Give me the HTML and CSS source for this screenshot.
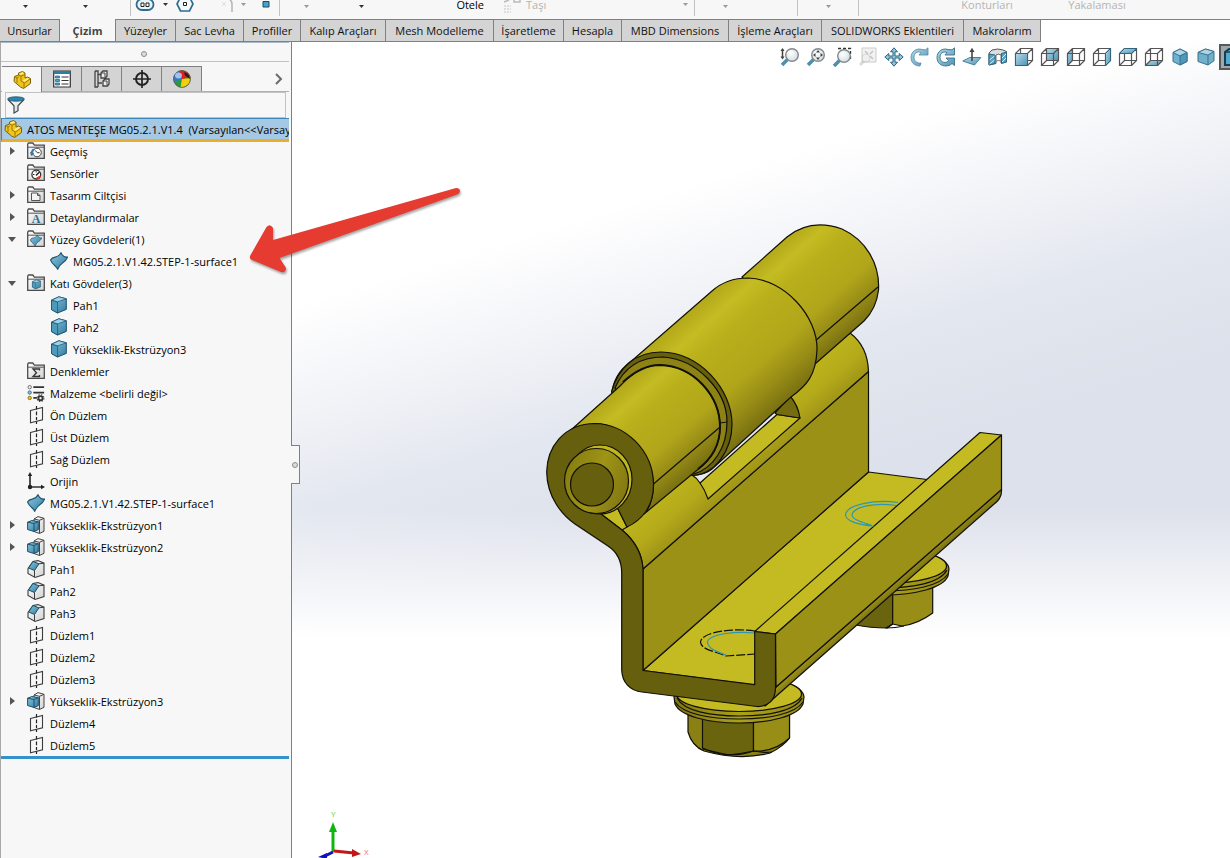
FILE: index.html
```html
<!DOCTYPE html>
<html lang="tr">
<head>
<meta charset="utf-8">
<title>ATOS MENTEŞE MG05.2.1.V1.4</title>
<link rel="stylesheet" href="styles.css">
</head>
<body>
<svg class="sprite" aria-hidden="true">
  <defs>
    <linearGradient id="gBlue" x1="0" y1="0" x2="1" y2="1"><stop offset="0" stop-color="#8cc6e0"/><stop offset="1" stop-color="#2f7b9f"/></linearGradient>
    <linearGradient id="gPale" x1="0" y1="0" x2="1" y2="1"><stop offset="0" stop-color="#b4dbec"/><stop offset="1" stop-color="#4f93b4"/></linearGradient>
    <linearGradient id="gGrey" x1="0" y1="0" x2="1" y2="1"><stop offset="0" stop-color="#ffffff"/><stop offset="1" stop-color="#d2d2d2"/></linearGradient>
    <radialGradient id="gLens" cx=".4" cy=".35" r=".7"><stop offset="0" stop-color="#ffffff"/><stop offset="1" stop-color="#cfdde3"/></radialGradient>
    <symbol id="folder" viewBox="0 0 18 18"><path d="M.7 16.3V2.2L1.5 1h4.3l1.6 2.2h9.9v13.1z" fill="url(#gGrey)" stroke="#4c4c4c" stroke-width="1.3"/><path d="M1 5.2h16" stroke="#555"/></symbol>
    <symbol id="history" viewBox="0 0 18 18"><use href="#folder"/><circle cx="10" cy="10.5" r="4.3" fill="#fff" stroke="#444"/><path d="M8 8.3l2.3 2.4h2.3" fill="none" stroke="#333"/><path d="M4.5 13.5c-.2-3 .3-5 2.2-6.2" fill="none" stroke="#2e7da5" stroke-width="1.6"/><path d="M2.8 10l2 4 2.2-3z" fill="#2e7da5"/></symbol>
    <symbol id="sensor" viewBox="0 0 18 18"><use href="#folder"/><circle cx="9.3" cy="10.6" r="4.4" fill="#fff" stroke="#333" stroke-width="1.3"/><path d="M9 11.5L12.5 8" stroke="#222" stroke-width="1.5"/><path d="M9.5 14l3.8-2-1 3z" fill="#e23b1c" stroke="#e23b1c"/><path d="M6 10.5h1.5M9.2 7v1.5" stroke="#333"/></symbol>
    <symbol id="binder" viewBox="0 0 18 18"><use href="#folder"/><path d="M4.5 7h6l2.5 2.5v5H4.5z" fill="#f4f4f4" stroke="#555"/><path d="M10.5 7v2.5H13" fill="none" stroke="#555"/></symbol>
    <symbol id="annot" viewBox="0 0 18 18"><use href="#folder"/><text x="9" y="15" text-anchor="middle" font-family="Liberation Serif, serif" font-weight="bold" font-size="12" fill="#2a6f93">A</text></symbol>
    <symbol id="surf" viewBox="0 0 18 18"><path d="M.5 8C3.500 3 7.500 7.500 11 .7C12.500 4 15 5.500 17.600 5C14.500 12.500 11.500 8.500 7.700 17.300C6.500 13.500 3 14 .5 8z" fill="url(#gBlue)" stroke="#1f556f" stroke-width="1.100"/></symbol>
    <symbol id="surfFolder" viewBox="0 0 18 18"><use href="#folder"/><use href="#surf" x="3" y="4.500" width="12" height="12"/></symbol>
    <symbol id="solid" viewBox="0 0 18 18"><path d="M1.500 4.200L8.800.8l7.500 2v10.600L7.500 17l-6-3.400z" fill="url(#gBlue)" stroke="#1c4f68"/><path d="M1.500 4.200L8.800.8l7.500 2-8.700 3.100z" fill="#9bd3ea" stroke="#1c4f68" stroke-width=".7"/><path d="M7.600 6V17l-6.100-3.400V4.200z" fill="#4d9abb" stroke="#1c4f68" stroke-width=".7"/></symbol>
    <symbol id="solidFolder" viewBox="0 0 18 18"><use href="#folder"/><use href="#solid" x="4.500" y="5.500" width="10" height="10"/></symbol>
    <symbol id="equation" viewBox="0 0 18 18"><use href="#folder"/><path d="M12.500 8.500V7H6l3.500 3.800L6 14.500h6.500V13" fill="none" stroke="#333" stroke-width="1.300"/></symbol>
    <symbol id="material" viewBox="0 0 20 20"><g stroke="#333" stroke-width="2"><path d="M7 3.500h12M7 9.500h12M7 15.500h4"/></g><circle cx="3" cy="3.500" r="1.900" fill="#eee" stroke="#666"/><circle cx="3" cy="9.500" r="1.900" fill="#70bfe0" stroke="#4c7282"/><circle cx="3" cy="15.500" r="1.900" fill="#f2c21c" stroke="#8a6e14"/><circle cx="15" cy="15.700" r="2.300" fill="none" stroke="#333" stroke-width="2"/><circle cx="15" cy="15.700" r="3.800" fill="none" stroke="#333" stroke-width="1.200" stroke-dasharray="1.500 1.500"/></symbol>
    <symbol id="plane" viewBox="0 0 18 18"><path d="M3.500 4.500l12-3v12.300l-12 3z" fill="none" stroke="#3c3c3c" stroke-width="1.100"/><path d="M9.500 0v3.500M9.500 5.500v3.800M9.500 11v3M9.500 15.500V18" stroke="#222" stroke-width="1.200"/></symbol>
    <symbol id="origin" viewBox="0 0 18 18"><path d="M3 2v13h12" fill="none" stroke="#333" stroke-width="1.700"/><path d="M.8 4L3 0l2.200 4zM14 12.800l4 2.200-4 2.200z" fill="#222"/><circle cx="3" cy="15" r="2.200" fill="#222"/></symbol>
    <symbol id="extrude" viewBox="0 0 18 18"><path d="M7 3l4-2.400 6 1.700v13L12.500 17.500 7 15.500z" fill="url(#gGrey)" stroke="#444"/><path d="M12.500 4.300L17 2.300M12.500 4.300v13M7 3l5.500 1.300" fill="none" stroke="#444"/><path d="M.6 6.200l4.200-1.700 6.500 1.100v8L7 15.500l-6.400-2z" fill="url(#gBlue)" stroke="#1c4f68"/><path d="M.6 6.200L7 7.500l4.300-1.900M7 7.500v8" fill="none" stroke="#1c4f68"/></symbol>
    <symbol id="chamfer" viewBox="0 0 18 18"><path d="M1 8.500L6 1.500 11 .6l6 2.600v11.300L8 17.400l-7-4z" fill="url(#gGrey)" stroke="#3d3d3d" stroke-width="1.100"/><path d="M1.500 8L6 1.500l6 2.300L7.500 10.500z" fill="url(#gBlue)" stroke="#1c4f68"/><path d="M7.500 10.500v6.500M12 3.800l5-.6" stroke="#3d3d3d" fill="none"/></symbol>
    <symbol id="part" viewBox="0 0 18 18"><path d="M1.500 5.500l4-1.500v-2l4-1.500L12 2v5l2.500-1 3 1.500v5l-7 5-3-1.500L1 10.500z" fill="#f3c51c" stroke="#7d6209"/><path d="M5.500 4L8 5.200V10l3.500 2 6-4.300M8 5.200L12 3.500M11 12v5M1.500 5.500L4 7v5M4 7l1.800-1" fill="none" stroke="#8f700b" stroke-width=".9"/><path d="M5.800 2.500l3.700-1.200 1.700.9L8 3.700zM9.500 9.500L14.500 7l1.800.8-4.800 3.200z" fill="#ffe98a"/></symbol>
    <symbol id="props" viewBox="0 0 18 18"><path d="M.7 1h16.600v16H.7z" fill="#fff" stroke="#333" stroke-width="1.200"/><path d="M.7 1h16.600v3H.7z" fill="#2d7ea5"/><path d="M8.500 7h7M8.500 10.500h7M8.500 14h7" stroke="#333"/><path d="M2.500 6h4v2h-4zM2.500 9.500h4v2h-4zM2.500 13h4v2h-4z" fill="#51a1c4" stroke="#245b76" stroke-width=".7"/></symbol>
    <symbol id="config" viewBox="0 0 18 18"><path d="M2 1h3v16M2 1v16h3M5 4.500h4M5 13h4" fill="none" stroke="#444" stroke-width="1.300"/><path d="M8 3l2-2h4v5l-1.500 2H8zM10 11l2-2h4v5l-1.500 2H10z" fill="#eee" stroke="#444" stroke-width="1.300"/><path d="M8 3h4v4M10 11h4v4" fill="none" stroke="#444"/></symbol>
    <symbol id="target" viewBox="0 0 18 18"><circle cx="9" cy="9" r="6" fill="none" stroke="#222" stroke-width="1.900"/><path d="M9 0v18M0 9h18" stroke="#222" stroke-width="1.700"/></symbol>
    <symbol id="ball" viewBox="0 0 18 18"><circle cx="9" cy="9" r="8.600" fill="#2e9a35"/><path d="M9 9L1 12C-.5 6 2 1.500 8 .4z" fill="#3379cf"/><path d="M9 9L6.500.7C11-.5 16.500 2 17.500 8z" fill="#d9241c"/><path d="M9 9l8.500-1c.5 5-4 9.500-10 9.500z" fill="#f2cf14"/><path d="M11 2q4 1 5.500 4L17 9l-5-3.500z" fill="#222"/><circle cx="9" cy="9" r="8.400" fill="none" stroke="#555" stroke-width=".8"/><ellipse cx="5.500" cy="5.500" rx="3.500" ry="3" fill="#fff" opacity=".55"/></symbol>
    <symbol id="funnel" viewBox="0 0 18 18"><path d="M1 3.500l6 6.300V17l4-2.300V9.800l6-6.300" fill="url(#gGrey)" stroke="#3c4a50" stroke-width="1.200"/><ellipse cx="9" cy="3" rx="8.400" ry="2.200" fill="#2f84ad" stroke="#1d5269" stroke-width=".8"/></symbol>
    <symbol id="lens" viewBox="0 0 20 20"><path d="M8 12l-6 6" stroke="#4e8fae" stroke-width="3.600"/><circle cx="12" cy="8" r="6.300" fill="url(#gLens)" stroke="#84898c" stroke-width="1.400"/></symbol>
    <symbol id="wire" viewBox="0 0 20 20"><path d="M1.500 6.500h12v12h-12zM6.500 1.500h12v12h-12zM1.500 6.500l5-5M13.500 6.500l5-5M13.500 18.500l5-5M1.500 18.500l5-5" fill="none" stroke="#555" stroke-width="1.200"/></symbol>
    <symbol id="isocube" viewBox="0 0 20 20"><path d="M10 2l7 3.500v9L10 18l-7-3.500v-9z" fill="#6fb1ce" stroke="#38718d"/><path d="M3 5.500L10 9l7-3.500L10 2z" fill="#add8e9" stroke="#38718d"/><path d="M10 9l7-3.500v9L10 18z" fill="#4e98b9" stroke="#38718d"/></symbol>
    <symbol id="caret" viewBox="0 0 7 9"><path d="M1 5h5L3.500 8z" fill="currentColor"/></symbol>
  </defs>
</svg>

<div class="app">
  <header class="ribbon">
    <span class="cell low"><svg class="caret"><use href="#caret"/></svg></span>
    <span class="cell low"><svg class="caret"><use href="#caret"/></svg></span>
    <span class="cell sep"></span>
    <span class="cell"><svg width="20" height="12" viewBox="0 0 20 12"><rect x="1.500" y="-1" width="17" height="11" rx="5.500" fill="#e8f3f8" stroke="#2c6d8f" stroke-width="1.800"/><path d="M6 3h3v3.500H6zM11 3h3v3.500h-3z" fill="#fff" stroke="#222"/></svg></span>
    <span class="cell"><svg class="caret"><use href="#caret"/></svg></span>
    <span class="cell"><svg width="20" height="13" viewBox="0 0 20 13"><path d="M5.500-3h9l3.500 7-3.500 7h-9L2 4z" fill="#f3f8fa" stroke="#2c6d8f" stroke-width="1.700"/><path d="M8.500 2.500h3v3h-3z" fill="#fff" stroke="#222"/></svg></span>
    <span class="cell end faded"><svg width="14" height="14" viewBox="0 0 14 14"><path d="M1 2l4 4M5 2L1 6" stroke="#ddd"/><path d="M9 0q2 1 2 4v8" fill="none" stroke="#b5b5b5" stroke-width="1.500"/></svg></span>
    <span class="cell faded"><svg class="caret"><use href="#caret"/></svg></span>
    <span class="cell sep"><svg width="8" height="8" viewBox="0 0 8 8"><path d="M1 1.500h6v5.500H1z" fill="#4aa0c6" stroke="#174d66"/></svg></span>
    <span class="cell low faded"><svg class="caret"><use href="#caret"/></svg></span>
    <span class="cell low"><svg class="caret"><use href="#caret"/></svg></span>
    <span class="cell label end">Ötele</span>
    <span class="cell end faded"><svg width="20" height="14" viewBox="0 0 20 14"><path d="M2 2l5-2M12-1v3h6v-4" fill="none" stroke="#bbb" stroke-width="1.500"/><path d="M2 6h7M2 9h7M2 12h7" stroke="#ddd" stroke-width="2" stroke-dasharray="2 1"/></svg></span>
    <span class="cell label start faded">Taşı</span>
    <span class="cell sep faded"><svg class="caret"><use href="#caret"/></svg></span>
    <span class="cell low faded"><svg class="caret"><use href="#caret"/></svg></span>
    <span class="cell sep"></span>
    <span class="cell low sep faded"><svg class="caret"><use href="#caret"/></svg></span>
    <span class="cell"></span>
    <span class="cell label faded">Konturları</span>
    <span class="cell label faded">Yakalaması</span>
  </header>

  <nav class="tabs">
    <button>Unsurlar</button><button class="active">Çizim</button><button>Yüzeyler</button><button>Sac Levha</button><button>Profiller</button><button>Kalıp Araçları</button><button>Mesh Modelleme</button><button>İşaretleme</button><button>Hesapla</button><button>MBD Dimensions</button><button>İşleme Araçları</button><button>SOLIDWORKS Eklentileri</button><button>Makrolarım</button>
  </nav>

  <main class="work">
    <aside class="side">
      <div class="grip"><span class="dot"></span></div>
      <div class="panes">
        <button class="active" aria-label="Tasarım Ağacı"><svg><use href="#part"/></svg></button>
        <button aria-label="Özellikler"><svg><use href="#props"/></svg></button>
        <button aria-label="Konfigürasyon"><svg><use href="#config"/></svg></button>
        <button aria-label="Ölçümlendirme"><svg><use href="#target"/></svg></button>
        <button aria-label="Görünüm"><svg><use href="#ball"/></svg></button>
        <button class="more" aria-label="Daha fazla"><svg viewBox="0 0 18 18"><path d="M7 4l5 5-5 5" fill="none" stroke="#6b6b6b" stroke-width="2"/></svg></button>
      </div>
      <div class="filter"><svg><use href="#funnel"/></svg><input type="text" aria-label="Filtre"></div>
      <div class="root"><svg><use href="#part"/></svg><span>ATOS MENTEŞE MG05.2.1.V1.4 &nbsp;(Varsayılan&lt;&lt;Varsayılan</span></div>
      <ul class="tree">
        <li><button class="exp" aria-label="Aç"></button><svg><use href="#history"/></svg>Geçmiş</li>
        <li><i></i><svg><use href="#sensor"/></svg>Sensörler</li>
        <li><button class="exp" aria-label="Aç"></button><svg><use href="#binder"/></svg>Tasarım Ciltçisi</li>
        <li><button class="exp" aria-label="Aç"></button><svg><use href="#annot"/></svg>Detaylandırmalar</li>
        <li><button class="exp open" aria-label="Kapat"></button><svg><use href="#surfFolder"/></svg>Yüzey Gövdeleri(1)</li>
        <li class="child"><i></i><svg><use href="#surf"/></svg>MG05.2.1.V1.42.STEP-1-surface1</li>
        <li><button class="exp open" aria-label="Kapat"></button><svg><use href="#solidFolder"/></svg>Katı Gövdeler(3)</li>
        <li class="child"><i></i><svg><use href="#solid"/></svg>Pah1</li>
        <li class="child"><i></i><svg><use href="#solid"/></svg>Pah2</li>
        <li class="child"><i></i><svg><use href="#solid"/></svg>Yükseklik-Ekstrüzyon3</li>
        <li><i></i><svg><use href="#equation"/></svg>Denklemler</li>
        <li><i></i><svg><use href="#material"/></svg>Malzeme &lt;belirli değil&gt;</li>
        <li><i></i><svg><use href="#plane"/></svg>Ön Düzlem</li>
        <li><i></i><svg><use href="#plane"/></svg>Üst Düzlem</li>
        <li><i></i><svg><use href="#plane"/></svg>Sağ Düzlem</li>
        <li><i></i><svg><use href="#origin"/></svg>Orijin</li>
        <li><i></i><svg><use href="#surf"/></svg>MG05.2.1.V1.42.STEP-1-surface1</li>
        <li><button class="exp" aria-label="Aç"></button><svg><use href="#extrude"/></svg>Yükseklik-Ekstrüzyon1</li>
        <li><button class="exp" aria-label="Aç"></button><svg><use href="#extrude"/></svg>Yükseklik-Ekstrüzyon2</li>
        <li><i></i><svg><use href="#chamfer"/></svg>Pah1</li>
        <li><i></i><svg><use href="#chamfer"/></svg>Pah2</li>
        <li><i></i><svg><use href="#chamfer"/></svg>Pah3</li>
        <li><i></i><svg><use href="#plane"/></svg>Düzlem1</li>
        <li><i></i><svg><use href="#plane"/></svg>Düzlem2</li>
        <li><i></i><svg><use href="#plane"/></svg>Düzlem3</li>
        <li><button class="exp" aria-label="Aç"></button><svg><use href="#extrude"/></svg>Yükseklik-Ekstrüzyon3</li>
        <li><i></i><svg><use href="#plane"/></svg>Düzlem4</li>
        <li><i></i><svg><use href="#plane"/></svg>Düzlem5</li>
      </ul>
    </aside>

    <section class="view">
      <svg class="model" viewBox="292 42 938 816" preserveAspectRatio="xMinYMin meet">
        <defs>
          <linearGradient id="cylA" gradientUnits="userSpaceOnUse" x1="571" y1="430" x2="644" y2="514"><stop offset="0" stop-color="#b2a81a"/><stop offset=".16" stop-color="#c5bb22"/><stop offset=".32" stop-color="#b9af1b"/><stop offset=".65" stop-color="#b1a61a"/><stop offset=".84" stop-color="#978c16"/><stop offset="1" stop-color="#7a7112"/></linearGradient>
          <linearGradient id="cylB" href="#cylA" gradientUnits="userSpaceOnUse" x1="635" y1="358" x2="722" y2="457"/>
          <linearGradient id="cylC" href="#cylA" gradientUnits="userSpaceOnUse" x1="787" y1="236" x2="863" y2="322"/>
          <linearGradient id="band" gradientUnits="userSpaceOnUse" x1="645" y1="514" x2="671" y2="544"><stop offset="0" stop-color="#bcb21c"/><stop offset=".5" stop-color="#b4a91a"/><stop offset="1" stop-color="#9f9417"/></linearGradient>
          <linearGradient id="under" gradientUnits="userSpaceOnUse" x1="880" y1="596" x2="889" y2="606"><stop offset="0" stop-color="#988d17"/><stop offset="1" stop-color="#625b0d"/></linearGradient>
          <linearGradient id="pin" x1="0" y1="0" x2="1" y2=".4"><stop offset="0" stop-color="#81780f"/><stop offset=".6" stop-color="#9f9417"/><stop offset="1" stop-color="#867c13"/></linearGradient>
          <linearGradient id="ring" x1="0" y1="0" x2="1" y2="0"><stop offset="0" stop-color="#7f7611"/><stop offset=".5" stop-color="#aba01a"/><stop offset="1" stop-color="#968b16"/></linearGradient>
          <g id="flange">
            <path d="M674 697C675 685 700 677 739 677S803 685 804 697L803 704C798 716 770 723 739 723S680 716 675 704Z" fill="url(#ring)"/>
            <path d="M675 702C683 714 710 719 739 719S795 714 803 702M677 698C684 711 710 716 739 716S795 711 802 698" fill="none"/>
            <ellipse cx="739" cy="694" rx="62.500" ry="17.500" fill="#c4ba22"/>
          </g>
        </defs>
        <g stroke="#111006" stroke-width="1.200" stroke-linejoin="round" fill="none">
          <path d="M850 580H892.700V624L887 628Q870 628 856 625Z" fill="#6b640f"/>
          <path d="M892.700 590L932.700 580V613Q918 624 902 626L892.700 624Z" fill="#988d17"/>
          <path d="M892.700 624L886 628Q896 628 904 626"/>
          <use href="#flange" x="145" y="-128"/>
          <path d="M688 710V732Q692 746 704 751Q740 761 770 753Q784 746 789.500 738V710Z" fill="#8a8013"/>
          <path d="M702.500 715V748Q728 760 753.500 751V715Z" fill="#6b640f"/>
          <path d="M753.500 715V751Q775 752 789.500 738V710Z" fill="#988d17"/>
          <path d="M702.500 749Q716 752 728 755Q740 754 753.500 751Q764 753 772 752"/>
          <use href="#flange"/>
          <path d="M643 670.500L868.500 472L927 479.500L900 560L755 685Z" fill="#c4ba22"/>
          <path d="M643 569L868.500 371.500V472L643 670.500Z" fill="#9c9117"/>
          <path d="M600 513L622 504L850 333C862 342 868 355 868.500 371.500L643 569C642 553 634 540 622 530Z" fill="url(#band)"/>
          <path d="M601 514L617 507L627 527L622 530Z" fill="#c4ba22"/>
          <path d="M692 474L765 404L790 398L777 414L700 483Z" fill="#e6e9f1" stroke="none"/>
          <path d="M700 483L777 414.500L800 418L708 499Q705 490 700 483Z" fill="#c4ba22"/>
          <path d="M692 475Q697 478 700 483"/>
          <path d="M775 413L790 396Q798 405 800 418L777 414.500Z" fill="#756c11"/>
          <path d="M742 277L787 237C803 224 822 222 842 229C866 240 880 264 878.500 290C877 303 872 313 864 321L815 364Z" fill="url(#cylC)"/>
          <path d="M878 287L815 341"/>
          <path d="M612 391C615 375 622 368 635 358L712 291C722 282 735 278 748 278C785 279 818 317 817 350C816 376 806 386 791 397L712 469C706 474 700 475 693 475Z" fill="url(#cylB)"/>
          <path d="M611.500 392C618 368 635 352 661 352C699 352 732 389 732 424C732 449 716 475 692 475.500Z" fill="#665f0e"/>
          <path d="M615 388C624 367 641 357 663 357C696 359 727 390 727 422C727 448 713 468 694 474Z" fill="#8d8315"/>
          <path d="M720 423L727 422"/>
          <path d="M571 430L620 386C632 373 645 365 660 365C694 366 720 396 720 427C720 448 710 461 696 471L644 514C650 508 653 500 653.500 484C650 450 620 424 595 423.500Z" fill="url(#cylA)"/>
          <path d="M623 382C634 372 646 365 660 365C694 366 720 396 720 427C720 446 710 460 698 469" stroke-width="1.900"/>
          <path d="M653.500 484L720 427"/>
          <path d="M754.700 631.500L980 432.500L1001.500 435L775.500 634Z" fill="#c4ba22"/>
          <path d="M776 687L1001.500 489.500C1002 496 999 501 993 505L765 706Z" fill="url(#under)"/>
          <path d="M775.500 634L1001.500 435V489.500L776 687Z" fill="#9c9117"/>
          <path d="M755 631C735 628 702 631 700.500 642C701 650 715 651 726 656L755 654" stroke-dasharray="9 2"/>
          <path d="M755 633C735 631 709 634 707.500 642C708 649 718 652 726 655M898 502.500C875 499 846 505 845.500 515C846 521 858 525 874 526M896 505.500C875 502 853 507 852 515C853 520 862 522 872 525.500" stroke="#2b97b8"/>
          <path d="M627 527C640 521 654 508 653.500 484C653 450 625 424 595 423.500C563 424 547 448 546.700 472C547 497 562 515 575 524L608 546C617 552 621.700 562 621.700 573V670C622 682 630 691 642 692L757 706.500C768 707 775.500 700 775.500 688V634L754.700 631.500V684.700L643 670.500V569C642 553 634 540 622 530L601 514L617 507Z" fill="#665f0e"/>
          <ellipse cx="600" cy="479.500" rx="32" ry="34.500" fill="#c0b61f"/>
          <ellipse cx="596.500" cy="481" rx="32" ry="32.500" fill="url(#pin)"/>
          <circle cx="592" cy="484.500" r="21.500" fill="#665f0e"/>
        </g>
        <g class="triad">
          <path d="M333 852V832" stroke="#12b412" stroke-width="3"/><path d="M329 832l4-10 4 10z" fill="#12b412"/>
          <path d="M334 851l20 2" stroke="#c01818" stroke-width="3"/><path d="M352 849l9 5-9 3z" fill="#c01818"/>
          <path d="M333 852l-10 5" stroke="#1414b4" stroke-width="3"/><path d="M327 853l-9 4 9 2z" fill="#1414b4"/>
          <text x="331" y="817" fill="#35d435">Y</text><text x="364" y="855" fill="#f07070">X</text>
        </g>
      </svg>

      <div class="tools">
        <button aria-label="Yakınlaştır"><svg><use href="#lens"/><path d="M2.500 2v9" stroke="#444" stroke-width="1.500"/><path d="M.5 4l2-3 2 3zM.5 9.500l2 3 2-3z" fill="#444"/></svg></button>
        <button aria-label="Sığdır"><svg><use href="#lens"/><path d="M12 3l2 2.500h-4zM12 13l2-2.500h-4zM7 8l2.500-2v4zM17 8l-2.500-2v4z" fill="#444"/></svg></button>
        <button aria-label="Alana yakınlaştır"><svg><path d="M6 1.500h12.500v12" fill="none" stroke="#333" stroke-width="1.300" stroke-dasharray="3 2"/><use href="#lens" y="1"/></svg></button>
        <button disabled aria-label="Seçime yakınlaştır"><svg><path d="M4 1h14v14H4z" fill="#f2f2f2" stroke="#ccc"/><path d="M7 4l3 3M15 4l-3 3M15 12l-3-3" stroke="#c4c4c4" stroke-width="1.500"/><g opacity=".5"><path d="M6 14l-4 4" stroke="#bbb" stroke-width="3"/><circle cx="8" cy="11" r="4" fill="#eee" stroke="#bbb"/></g></svg></button>
        <button aria-label="Kaydır"><svg><path d="M10 .8l3.500 4H11v4.200h4.200V6.500l4 3.500-4 3.500V11H11v4.200h2.500l-3.500 4-3.500-4H9V11H4.800v2.500L.8 10l4-3.500V9H9V4.800H6.500z" fill="#8ec5dd" stroke="#2f657f"/></svg></button>
        <button aria-label="Döndür"><svg><path d="M12 2.500C6 .5 1 5 1 10.500S5 19 10 19l1-3c-4 .500-7-2-7-5.500C4 6 7 4 11 5.500L9 8h9V.8l-2.500 2z" fill="url(#gPale)" stroke="#55889f" stroke-width=".8"/></svg></button>
        <button aria-label="Yuvarla"><svg><path d="M12 2.500C6 .5 1 5 1 10.500S5 19 10 19q4 0 6-2.500l2.500 2V11H10l2.500 2.500q-1.500 2-3.500 2c-3 0-5-2-5-5C4 6 7 4 11 5.500L9 8h9.500V.8L16 2.800z" fill="url(#gPale)" stroke="#3c7088" stroke-width=".9"/></svg></button>
        <button aria-label="Normal"><svg><path d="M.8 14l7-3.500h11L12.500 18z" fill="url(#gPale)" stroke="#477f9a"/><path d="M10 14V3" stroke="#444" stroke-width="1.600"/><path d="M7.500 5L10 .8 12.500 5z" fill="#444"/></svg></button>
        <button aria-label="Kesit"><svg><path d="M1 6l3-3q6-2 11 0l3.500 1.500V15l-5.500 1V8q-3-1.500-5 0v8.500L1 18z" fill="#ddd" stroke="#555"/><path d="M8 8q2-1.500 5 0v6q-3-1-5 0z" fill="#fff" stroke="#777"/><path d="M1 7l6 1v8.500L1 18zM13.500 6.500l5-1.500v10l-5 1.500z" fill="#57a0bf" stroke="#2f657f"/><path d="M1.500 13l5-4M1.500 17l5-4M14 11l4-4M14 15l4-4" stroke="#d9eef6"/></svg></button>
        <button aria-label="Ön"><svg><use href="#wire"/><path d="M1.500 6.500h12v12h-12z" fill="url(#gPale)" stroke="#2f657f"/></svg></button>
        <button aria-label="Arka"><svg><path d="M6.500 1.500h12v12h-12z" fill="url(#gPale)"/><use href="#wire"/></svg></button>
        <button aria-label="Sol"><svg><path d="M1.500 6.500l5-5v12l-5 5z" fill="url(#gPale)"/><use href="#wire"/></svg></button>
        <button aria-label="Sağ"><svg><use href="#wire"/><path d="M13.500 6.500l5-5v12l-5 5z" fill="url(#gPale)" stroke="#2f657f"/></svg></button>
        <button aria-label="Üst"><svg><use href="#wire"/><path d="M1.500 6.500l5-5h12l-5 5z" fill="url(#gPale)" stroke="#2f657f"/></svg></button>
        <button aria-label="Alt"><svg><path d="M1.500 18.500l5-5h12l-5 5z" fill="url(#gPale)"/><use href="#wire"/></svg></button>
        <button aria-label="İzometrik"><svg><use href="#isocube"/></svg></button>
        <button aria-label="Trimetrik"><svg><path d="M2 5.500L9.500 2 18 4.500v9.300L12 18 2 14.500z" fill="#70b0ca" stroke="#38718d"/><path d="M2 5.500L12 8l6-3.500L9.500 2z" fill="#acd5e5" stroke="#38718d"/><path d="M12 8v10" stroke="#38718d"/></svg></button>
        <button class="pressed" aria-label="Gölgeli"><svg><path d="M3 5l4-3h12v13l-3 3H3z" fill="#54abd0" stroke="#123f55" stroke-width="2"/><path d="M3 5h13V18" fill="none" stroke="#123f55" stroke-width="1.500"/></svg></button>
      </div>
    </section>
    <span class="splitter"><span class="dot"></span></span>
    <svg class="pointer" width="220" height="96" viewBox="245 182 220 96"><path d="M250.500 255L266.500 227Q270 223 273 228V240L456 188Q460 188 460 191Q460 193 457 194.500L279.500 258L286 268Q286 273 281 272L251 259.500Q249 258 250.500 255Z" fill="#e53b30"/></svg>
  </main>
</div>
</body>
</html>
```
FILE: styles.css
```css
* { box-sizing: border-box; }
body {
  margin: 0;
  font-family: "Open Sans", "Noto Sans", sans-serif;
  font-size: 11px;
  color: #000;
  background: #fff;
}
button { font: inherit; color: inherit; border: 0; padding: 0; background: none; }
svg { flex: none; }
.sprite { position: absolute; width: 0; height: 0; }
.app { height: 100vh; display: flex; flex-direction: column; overflow: hidden; }

.ribbon {
  display: grid;
  grid-template-columns: 50px 70px 11px 28px 12px 28px 36px 17px 28px 52px 58px 94px 38px 154px 19px 61px 42px 61px 73px 110px 110px;
  height: 20px;
  overflow: hidden;
  background: #f7f7f7;
  border-bottom: 1px solid #808080;
}
.cell { display: flex; justify-content: center; height: 16px; color: #333; }
.cell.low { padding-top: 2px; }
.cell.start { justify-content: flex-start; padding-left: 4px; }
.cell.end { justify-content: flex-end; }
.cell.sep { border-right: 1px solid #c2c2c2; }
.cell.faded { color: #999; }
.cell.label { line-height: 9px; color: #000; }
.cell.label.faded { color: #b4b4b4; }
.caret { width: 7px; height: 9px; margin-top: -2px; }

.tabs {
  display: grid;
  grid-template-columns: 60px 56px 60px 68px 57px 85px 108px 70px 58px 107px 93px 142px 77px;
  height: 22px;
}
.tabs button {
  background: #d4d4d4;
  border-right: 1px solid #808080;
  border-bottom: 1px solid #808080;
  white-space: nowrap;
  color: #111;
}
.tabs .active { background: #f7f7f7; font-weight: bold; color: #444; margin-top: -1px; }

.work { position: relative; flex: 1; display: flex; min-height: 0; }
.side {
  width: 292px;
  flex: none;
  padding-right: 2px;
  background: #f7f7f7;
  border-left: 1px solid #a8a8a8;
  border-right: 1px solid #808080;
}
.grip {
  height: 20px;
  display: flex;
  align-items: center;
  justify-content: center;
  border-top: 1px solid #a9bac6;
  border-bottom: 1px solid #c2c2c2;
  padding-top: 4px;
}
.grip .dot { margin-right: 2px; }
.dot { width: 6px; height: 6px; border: 1px solid #8c8c8c; border-radius: 50%; background: #ddd; }
.panes { display: flex; height: 30px; padding: 4px 0 0 1px; border-bottom: 1px solid #b0b0b0; }
.panes button {
  width: 40px;
  display: flex;
  align-items: center;
  justify-content: center;
  background: #d4d4d4;
  border-top: 1px solid #808080;
  border-right: 1px solid #808080;
}
.panes .active { background: #f7f7f7; margin-bottom: -1px; }
.panes .more { margin-left: auto; width: 22px; background: none; border: 0; }
.side svg { width: 18px; height: 18px; }
.filter {
  display: flex;
  align-items: center;
  height: 26px;
  margin: 0 3px 0 4px;
  padding-left: 1px;
  border: 1px solid #c2c2c2;
}
.filter input { flex: 1; min-width: 0; border: 0; background: none; outline: 0; }
.root {
  display: flex;
  align-items: center;
  gap: 5px;
  height: 24px;
  padding-left: 2px;
  background: #a5c8e4;
  border-top: 1px solid #3a87b7;
  border-left: 1px solid #3a87b7;
  border-bottom: 3px solid #e8ae2e;
  overflow: hidden;
  white-space: nowrap;
}
.tree { list-style: none; margin: -2px 0 0; padding: 0; border-bottom: 3px solid #3491c9; }
.tree li { display: flex; align-items: center; height: 22px; padding-left: 7px; white-space: nowrap; }
.tree li svg { margin-right: 5px; }
.tree i, .exp { width: 19px; flex: none; }
.tree .child i { width: 42px; }
.exp::before {
  content: "";
  display: block;
  width: 0;
  margin-left: 2px;
  border: 4px solid transparent;
  border-left: 5px solid #555;
  border-right: 0;
}
.exp.open::before {
  margin-left: 0;
  border: 4px solid transparent;
  border-top: 5px solid #555;
  border-bottom: 0;
}

.view {
  position: relative;
  flex: 1;
  overflow: hidden;
  background:
    linear-gradient(180deg, rgba(255, 255, 255, 0) 57%, #fff 73%),
    linear-gradient(163deg, #fff 24%, #f3f4f8 33%, #e3e7ef 43%, #dde1eb 54%);
}
.model { display: block; width: 100%; height: 100%; }
.triad text { font-size: 8px; }
.tools { position: absolute; top: 2px; right: -15px; display: flex; }
.tools button { width: 26px; height: 26px; display: flex; align-items: center; justify-content: center; }
.tools svg { width: 20px; height: 20px; }
.tools .pressed { background: #a3a7aa; border: 2px solid #55595c; }
.splitter {
  position: absolute;
  left: 291px;
  top: 403px;
  width: 9px;
  height: 39px;
  display: flex;
  align-items: center;
  justify-content: center;
  background: #f7f7f7;
  border: 1px solid #808080;
  border-left: 0;
}
.pointer { position: absolute; left: 245px; top: 140px; filter: drop-shadow(1px 2px 1px rgba(0, 0, 0, .35)); }
```
